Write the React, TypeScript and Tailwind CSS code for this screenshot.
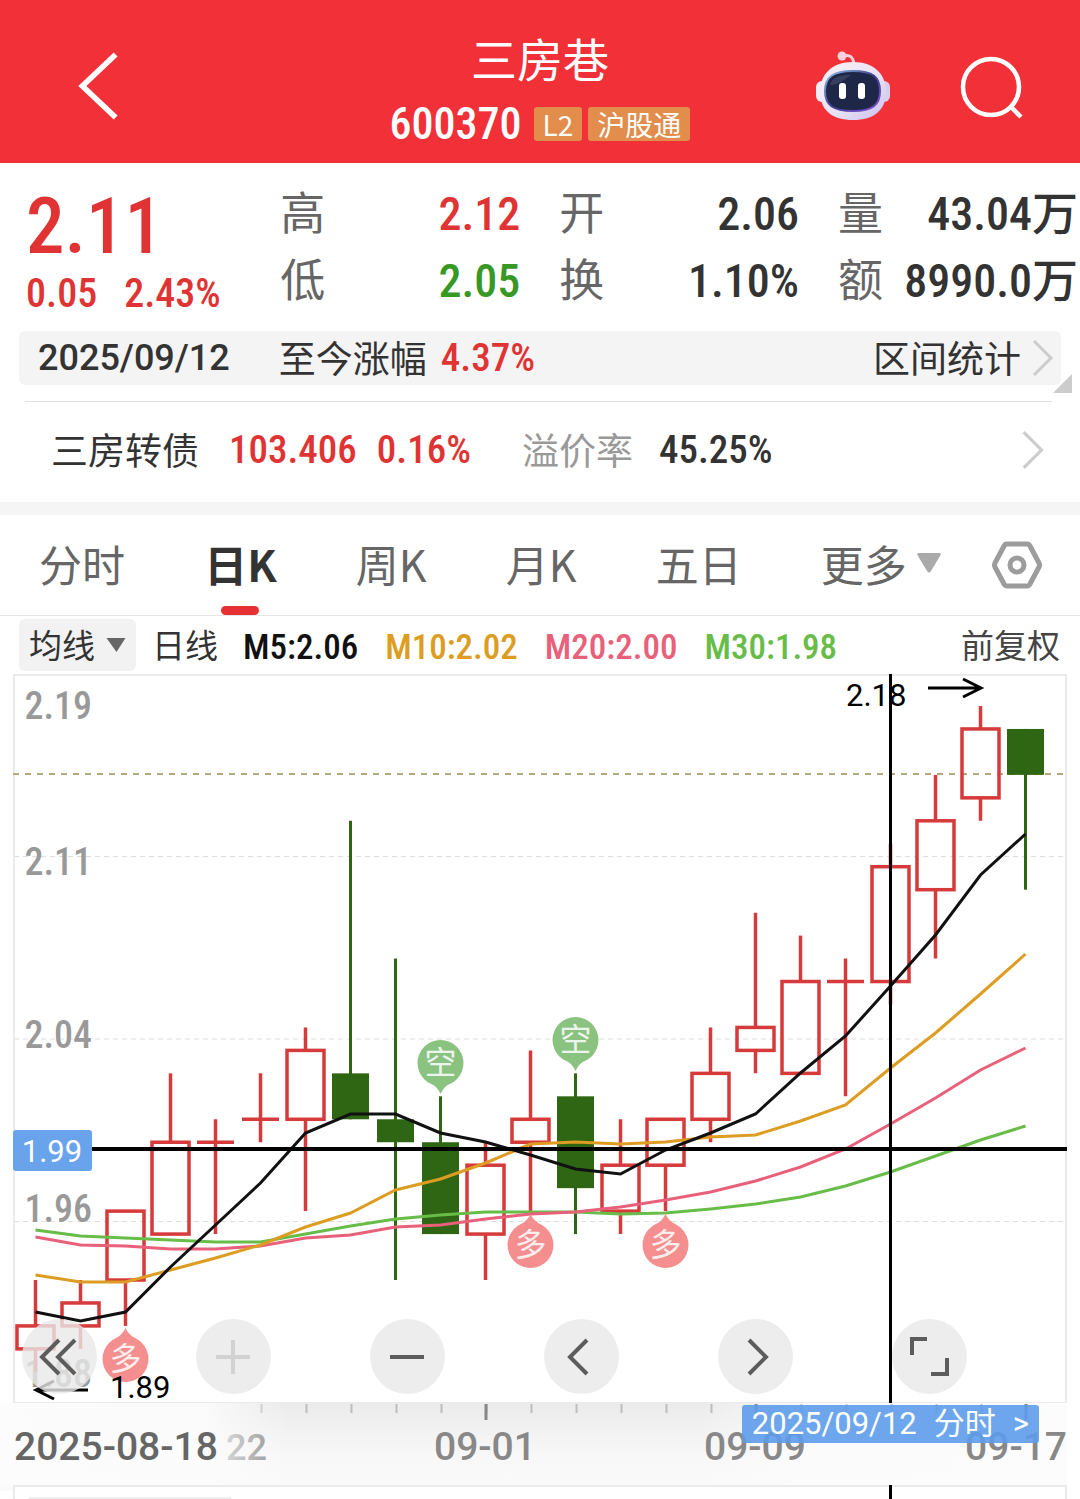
import React from "react";

type Candle = [open: number, high: number, low: number, close: number];

const candles: Candle[] = [
  [1.9, 1.93, 1.89, 1.91],
  [1.91, 1.93, 1.9, 1.92],
  [1.93, 1.96, 1.91, 1.96],
  [1.95, 2.02, 1.95, 1.99],
  [1.99, 2.0, 1.95, 1.99],
  [2.0, 2.02, 1.99, 2.0],
  [2.0, 2.04, 1.96, 2.03],
  [2.02, 2.13, 2.0, 2.0],
  [2.0, 2.07, 1.93, 1.99],
  [1.99, 2.01, 1.95, 1.95],
  [1.95, 1.99, 1.93, 1.98],
  [1.99, 2.03, 1.96, 2.0],
  [2.01, 2.02, 1.95, 1.97],
  [1.96, 2.0, 1.95, 1.98],
  [1.98, 2.0, 1.96, 2.0],
  [2.0, 2.04, 1.99, 2.02],
  [2.03, 2.09, 2.02, 2.04],
  [2.02, 2.08, 2.02, 2.06],
  [2.06, 2.07, 2.01, 2.06],
  [2.06, 2.12, 2.05, 2.11],
  [2.1, 2.15, 2.07, 2.13],
  [2.14, 2.18, 2.13, 2.17],
  [2.17, 2.17, 2.1, 2.15],
];

// moving averages, in plot units
const averages = [
  {
    color: "#67bd48",
    ys: [556, 562, 564, 566, 568, 568, 560, 552, 545, 541, 538, 538, 538, 540, 539, 535, 530, 523, 512, 498, 482, 466, 452],
  },
  {
    color: "#e9607a",
    ys: [563, 571, 572, 575, 575, 572, 564, 561, 553, 551, 545, 540, 538, 533, 526, 518, 507, 493, 475, 450, 424, 396, 374],
  },
  {
    color: "#dd9c22",
    ys: [601, 608, 608, 596, 584, 571, 553, 539, 516, 505, 489, 470, 468, 470, 468, 463, 461, 447, 431, 394, 359, 320, 280],
  },
  {
    color: "#111111",
    ys: [638, 647, 638, 593, 551, 509, 459, 440, 440, 459, 468, 481, 495, 500, 476, 459, 440, 399, 362, 312, 261, 201, 160],
  },
];

const priceLabels = [
  { text: "2.19", y: 45 },
  { text: "2.11", y: 201 },
  { text: "2.04", y: 374 },
  { text: "1.96", y: 548 },
  { text: "1.88", y: 713 },
];

const quotes = [
  { label: "高", value: "2.12", tone: "text-[#e03434]" },
  { label: "开", value: "2.06", tone: "text-[#333333]" },
  { label: "量", value: "43.04万", tone: "text-[#333333]" },
  { label: "低", value: "2.05", tone: "text-[#389826]" },
  { label: "换", value: "1.10%", tone: "text-[#333333]" },
  { label: "额", value: "8990.0万", tone: "text-[#333333]" },
];

const tabs = ["分时", "日K", "周K", "月K", "五日"];

const NUM = "font-['Roboto_Condensed',Roboto,'Noto_Sans_CJK_SC',sans-serif] font-medium";
const DATE = "font-[Roboto,'Noto_Sans_CJK_SC',sans-serif] font-medium";

const xAt = (i: number) => 35.5 + i * 45;
const yAt = (price: number) => 32 + (2.18 - price) * 2296;

const Chevron = ({ d, size, stroke, width = 2 }: { d: string; size: number; stroke: string; width?: number }) => (
  <svg width={size} height={size} viewBox="0 0 40 40" fill="none" stroke={stroke} strokeWidth={width} aria-hidden="true">
    <path d={d} />
  </svg>
);

const Robot = () => (
  <svg width="76" height="70" viewBox="0 0 76 70" aria-hidden="true">
    <defs>
      <linearGradient id="shell" x1="0" y1="0" x2="1" y2="1">
        <stop offset="0" stopColor="#fdf2f6" />
        <stop offset="0.6" stopColor="#e6e0f4" />
        <stop offset="1" stopColor="#c9bfee" />
      </linearGradient>
      <linearGradient id="rim" x1="0" y1="0" x2="1" y2="1">
        <stop offset="0" stopColor="#8fc6ea" />
        <stop offset="0.5" stopColor="#3f3d8f" />
        <stop offset="1" stopColor="#8a50d8" />
      </linearGradient>
    </defs>
    <path d="M28 5C35 3 38 6 39 13" fill="none" stroke="#f9cfdc" strokeWidth="3" />
    <circle cx="27" cy="5" r="4.5" fill="#fbd3de" />
    <rect x="1" y="30" width="14" height="21" rx="6" fill="#f5e9f4" />
    <rect x="61" y="30" width="14" height="21" rx="6" fill="#d9cdf0" />
    <path d="M38 11C60 11 71 24 71 41C71 59 59 69 38 69C17 69 5 59 5 41C5 24 16 11 38 11Z" fill="url(#shell)" />
    <path d="M38 20C58 20 65 26 65 40C65 54 58 60 38 60C18 60 10 54 10 40C10 26 18 20 38 20Z" fill="#1f2748" stroke="url(#rim)" strokeWidth="2" />
    <path d="M15 34C17 26 25 24 36 24C30 28 24 34 15 34Z" fill="#47506f" opacity="0.6" />
    <rect x="24" y="32" width="7" height="16" rx="3" fill="#fff" />
    <rect x="43" y="32" width="7" height="16" rx="3" fill="#fff" />
  </svg>
);

const Pin = ({ x, y, text, up }: { x: number; y: number; text: string; up?: boolean }) => (
  <g>
    <circle cx={x} cy={y} r="23" fill={up ? "#f58e8e" : "#8ac27f"} />
    <path
      d={up ? `M${x - 11} ${y - 20}Q${x - 3} ${y - 24} ${x} ${y - 31}Q${x + 3} ${y - 24} ${x + 11} ${y - 20}Z` : `M${x - 14} ${y + 18}Q${x - 3} ${y + 23} ${x} ${y + 31}Q${x + 3} ${y + 23} ${x + 14} ${y + 18}Z`}
      fill={up ? "#f58e8e" : "#8ac27f"}
    />
    <text x={x} y={y + 11} textAnchor="middle" fontSize="32" fill="#fff" fillOpacity="0.85">
      {text}
    </text>
  </g>
);

const Plot = () => (
  <svg viewBox="0 0 1080 729" className="w-full" role="img" aria-label="日K">
    <rect x="14" y="1" width="1052" height="728" fill="#fff" stroke="#ebebeb" strokeWidth="2" />
    {[182.5, 365, 547.5].map((y) => (
      <line key={y} x1="14" x2="1066" y1={y} y2={y} stroke="#dedede" strokeDasharray="5 4" />
    ))}
    <line x1="13" x2="1066" y1="100" y2="100" stroke="#b9a67a" strokeWidth="2" strokeDasharray="6 6" />

    <g className={NUM} fontSize="38" fill="#999999">
      {priceLabels.map((p) => (
        <text key={p.text} x="92" y={p.y} textAnchor="end">
          {p.text}
        </text>
      ))}
    </g>

    {candles.map(([open, high, low, close], i) => {
      const x = xAt(i);
      const top = yAt(Math.max(open, close));
      const bottom = yAt(Math.min(open, close));
      if (close < open) {
        return (
          <g key={i} fill="#2f6613">
            <rect x={x - 1.5} y={yAt(high)} width="3" height={yAt(low) - yAt(high)} />
            <rect x={x - 18.5} y={top} width="37" height={bottom - top} />
          </g>
        );
      }
      return (
        <g key={i} fill="none" stroke="#d63a3a" strokeWidth="3.5">
          <path d={`M${x} ${yAt(high)}V${top}M${x} ${bottom}V${yAt(low)}`} />
          {top === bottom ? <path d={`M${x - 18.5} ${top}h37`} /> : <rect x={x - 18.5} y={top} width="37" height={bottom - top} />}
        </g>
      );
    })}

    {averages.map((a) => (
      <polyline key={a.color} points={a.ys.map((y, i) => `${xAt(i)},${y}`).join(" ")} fill="none" stroke={a.color} strokeWidth="3" />
    ))}

    <Pin x={440.5} y={389} text="空" />
    <Pin x={575.5} y={366} text="空" />
    <Pin x={530.5} y={571} text="多" up />
    <Pin x={665.5} y={571} text="多" up />
    <Pin x={125.5} y={685} text="多" up />

    <g className="font-[Roboto,sans-serif]" fontSize="31">
      <text x="846" y="32">2.18</text>
      <text x="110" y="724">1.89</text>
    </g>
    <path d="M928 14H980M963 5L981 14L963 23M88 716H36M54 707L36 716L54 725" fill="none" stroke="#000" strokeWidth="3" />

    <line x1="13" x2="1067" y1="475" y2="475" stroke="#000" strokeWidth="4" />
    <line x1="890.5" x2="890.5" y1="0" y2="729" stroke="#000" strokeWidth="3" />
    <rect x="13" y="456" width="79" height="41" rx="3" fill="#68a3ec" />
    <text x="52" y="488" textAnchor="middle" className="font-[Roboto,sans-serif]" fontSize="31" fill="#fff">
      1.99
    </text>
  </svg>
);

const DateAxis = () => (
  <svg viewBox="0 0 1080 96" className="w-full" aria-hidden="true">
    <defs>
      <linearGradient id="shade" x1="0" y1="0" x2="0" y2="1">
        <stop offset="0" stopColor="#ebebeb" />
        <stop offset="0.6" stopColor="#f8f8f8" />
        <stop offset="1" stopColor="#fafafa" />
      </linearGradient>
      <linearGradient id="fade" x1="0" y1="0" x2="1" y2="0">
        <stop offset="0" stopColor="#fcfcfc" />
        <stop offset="0.7" stopColor="#fcfcfc" stopOpacity="0.9" />
        <stop offset="1" stopColor="#fafafa" stopOpacity="0" />
      </linearGradient>
    </defs>
    <rect x="0" y="0" width="1067" height="88" fill="url(#shade)" />
    <rect x="700" y="0" width="367" height="88" fill="url(#fade)" transform="rotate(180 883.5 44)" />
    <g stroke="#bdbdbd" strokeWidth="2">
      {candles.map((_, i) => i > 4 && <line key={i} x1={xAt(i) + 1} x2={xAt(i) + 1} y1="1" y2="10" />)}
    </g>
    <path d="M486 1V17M756 1V17M1026 1V17" stroke="#888" strokeWidth="3" />
    <g className={DATE} fontSize="39" fill="#888888">
      <text x="485" y="57" textAnchor="middle">09-01</text>
      <text x="755" y="57" textAnchor="middle">09-09</text>
      <text x="1067" y="57" textAnchor="end">09-17</text>
      <text x="267" y="57" textAnchor="end" fontSize="36">22</text>
    </g>
    <rect x="0" y="0" width="290" height="82" fill="url(#fade)" />
    <text x="14" y="57" className={DATE} fontSize="39" fill="#666666">
      2025-08-18
    </text>
    <path d="M14 96V83H1066V96" fill="#fff" stroke="#ebebeb" strokeWidth="2" />
    <line x1="29" x2="231" y1="95" y2="95" stroke="#efefef" strokeWidth="2" />
    <line x1="890.5" x2="890.5" y1="82" y2="96" stroke="#000" strokeWidth="3" />
  </svg>
);

const controls = [
  { label: "首页", d: "M20 3L3 20L20 37M36 3L19 20L36 37" },
  { label: "放大", d: "M3 20H37M20 3V37", off: true },
  { label: "缩小", d: "M3 20H37" },
  { label: "左移", d: "M26 3L9 20L26 37" },
  { label: "右移", d: "M14 3L31 20L14 37" },
  { label: "全屏", d: "M3 18V2H18M38 21V37H22" },
];

export default function App() {
  return (
    <div className="w-full overflow-hidden bg-white font-['Noto_Sans_CJK_SC',sans-serif] text-[#333333]">
      <header className="grid h-[163px] grid-cols-[1fr_auto_1fr] items-center bg-[#f23038] pt-2 text-white">
        <button type="button" aria-label="返回" className="ml-[62px] w-fit">
          <Chevron d="M29 3L11 20L29 37" size={74} stroke="#fff" width={3} />
        </button>
        <div className="flex flex-col items-center pt-3">
          <h1 className="text-[46px] leading-[64px] font-normal">三房巷</h1>
          <div className="flex items-center gap-[6px]">
            <span className={`${NUM} mr-[6px] text-[44px] leading-[70px]`}>600370</span>
            <span className="rounded-[3px] bg-[#e28d4b] px-[9px] text-[28px] leading-[34px]">L2</span>
            <span className="rounded-[3px] bg-[#e28d4b] px-[9px] text-[28px] leading-[34px]">沪股通</span>
          </div>
        </div>
        <div className="mr-[55px] flex items-center justify-end gap-[68px]">
          <button type="button" aria-label="助手">
            <Robot />
          </button>
          <button type="button" aria-label="搜索">
            <svg width="66" height="66" viewBox="0 0 66 66" fill="none" stroke="#fff" strokeWidth="4.5" aria-hidden="true">
              <circle cx="32" cy="34" r="28" />
              <path d="M51 53L62 64" />
            </svg>
          </button>
        </div>
      </header>

      <section className="grid h-[168px] grid-cols-[27fr_100fr] gap-x-[39px] pr-[2px] pl-[26px]">
        <div className={`${NUM} min-w-0 whitespace-nowrap text-[#e03434]`}>
          <p className="mt-6 text-[77px] leading-[80px]">2.11</p>
          <p className="flex gap-[27px] text-[40px] leading-[54px]">
            <span>0.05</span>
            <span>2.43%</span>
          </p>
        </div>
        <dl className="mt-4 grid min-w-0 auto-rows-[67px] grid-cols-3 gap-x-[39px]">
          {quotes.map((q) => (
            <div key={q.label} className="flex min-w-0 items-center justify-between whitespace-nowrap">
              <dt className="pb-1 text-[45px] leading-[63px] text-[#666666]">{q.label}</dt>
              <dd className={`${NUM} pt-1 text-[46px] leading-[63px] ${q.tone}`}>{q.value}</dd>
            </div>
          ))}
        </dl>
      </section>

      <section className="relative mx-[19px]">
        <div className="flex h-[54px] items-center rounded-md bg-[#f4f4f4] pl-[19px] text-[37px]">
          <span className={`${DATE} text-[36px]`}>2025/09/12</span>
          <span className="ml-[49px]">至今涨幅</span>
          <span className={`${NUM} ml-[14px] text-[39px] text-[#e03434]`}>4.37%</span>
          <button type="button" className="ml-auto flex items-center">
            区间统计
            <Chevron d="M13 3L30 20L13 37" size={40} stroke="#cccccc" width={3} />
          </button>
        </div>
        <span className="absolute top-[43px] -right-[11px] size-[19px] bg-[#cccccc] [clip-path:polygon(100%_0,100%_100%,0_100%)]" />
      </section>

      <a href="#bond" className="mr-[28px] ml-[25px] mt-4 flex h-[101px] items-center border-t border-[#e0e0e0] pb-1 pl-[26px] text-[37px]">
        <span>三房转债</span>
        <span className={`${NUM} ml-[30px] text-[39px] text-[#e03434]`}>103.406</span>
        <span className={`${NUM} ml-[20px] text-[39px] text-[#e03434]`}>0.16%</span>
        <span className="ml-[51px] text-[#999999]">溢价率</span>
        <span className={`${NUM} ml-[26px] text-[39px]`}>45.25%</span>
        <span className="ml-auto">
          <Chevron d="M13 3L30 20L13 37" size={42} stroke="#cccccc" width={3} />
        </span>
      </a>

      <nav className="flex h-[114px] items-center justify-between border-t-[13px] border-b border-t-[#f5f5f5] border-b-[#e6e6e6] pr-[38px] pl-[39px] text-[43px] text-[#666666]">
        {tabs.map((tab) =>
          tab === "日K" ? (
            <button key={tab} type="button" aria-current="page" className="relative h-full pb-1 font-bold text-[#333333]">
              {tab}
              <span className="absolute bottom-0 left-1/2 h-[9px] w-[38px] -translate-x-1/2 rounded-full bg-[#e53131]" />
            </button>
          ) : (
            <button key={tab} type="button" className="pb-1">
              {tab}
            </button>
          )
        )}
        <button type="button" className="flex items-center gap-[10px] pb-1">
          更多
          <svg width="24" height="20" viewBox="0 0 24 20" fill="#aaaaaa" aria-hidden="true">
            <path d="M2 0H22Q25 0 23 3L14 18Q12 21 10 18L1 3Q-1 0 2 0Z" />
          </svg>
        </button>
        <button type="button" aria-label="设置" className="-ml-7">
          <svg width="50" height="50" viewBox="0 0 50 50" fill="none" stroke="#9c9c9c" strokeWidth="5" strokeLinejoin="round" aria-hidden="true">
            <path d="M15 4H35Q37 4 38 6L47 23Q48 25 47 27L38 44Q37 46 35 46H15Q13 46 12 44L3 27Q2 25 3 23L12 6Q13 4 15 4Z" />
            <circle cx="25" cy="25" r="7" />
          </svg>
        </button>
      </nav>

      <div className="flex h-[58px] items-center pr-5 pl-[19px] text-[33px] whitespace-nowrap">
        <button type="button" className="flex h-[52px] items-center gap-[11px] rounded-md bg-[#f2f2f2] px-[10px]">
          均线
          <svg width="20" height="14" viewBox="0 0 19 14" fill="#666666" aria-hidden="true">
            <path d="M0 0H19L10 14Z" />
          </svg>
        </button>
        <span className="ml-4">日线</span>
        <div className={`${NUM} ml-[25px] flex gap-[27px] pt-[6px] text-[35px]`}>
          <span className="text-[#111111]">M5:2.06</span>
          <span className="text-[#dd9c22]">M10:2.02</span>
          <span className="text-[#e9607a]">M20:2.00</span>
          <span className="text-[#67bd48]">M30:1.98</span>
        </div>
        <button type="button" className="ml-auto text-[#444444]">
          前复权
        </button>
      </div>

      <div className="relative">
        <Plot />
        <div className="absolute right-[10.5%] bottom-[9px] left-[2%] flex justify-between">
          {controls.map((c) => (
            <button
              key={c.label}
              type="button"
              aria-label={c.label}
              disabled={c.off}
              className="flex size-[75px] items-center justify-center rounded-full bg-[#e8e8e8]/80"
            >
              <Chevron d={c.d} size={40} stroke={c.off ? "#d2d2d2" : "#5c5c5c"} width={4} />
            </button>
          ))}
        </div>
      </div>

      <div className="relative">
        <DateAxis />
        <button
          type="button"
          className="absolute top-[2px] right-[3.8%] flex h-[38px] items-center gap-[17px] rounded-[3px] bg-[#5d9cea]/90 px-[10px] font-[Roboto,'Noto_Sans_CJK_SC',sans-serif] text-[31px] whitespace-nowrap text-white"
        >
          <span>2025/09/12</span>
          <span>分时</span>
          <span>&gt;</span>
        </button>
      </div>
    </div>
  );
}
